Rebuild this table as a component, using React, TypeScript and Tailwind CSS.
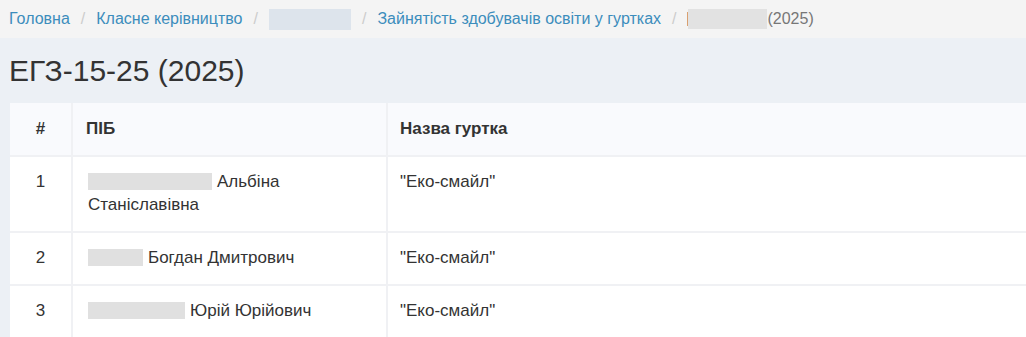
import React from "react";

const rows = [
  { n: 1, blur: "w-[124px]", name: "Альбіна Станіславівна", club: '"Еко-смайл"' },
  { n: 2, blur: "w-[55px]", name: "Богдан Дмитрович", club: '"Еко-смайл"' },
  { n: 3, blur: "w-[97px]", name: "Юрій Юрійович", club: '"Еко-смайл"' },
];

function Sep() {
  return <span className="px-[11px] text-[#cccccc]">/</span>;
}

export default function App() {
  return (
    <div className="w-[1026px] h-[337px] overflow-hidden bg-[#ecf0f5] text-[#333333] font-['Liberation_Sans',Arial,sans-serif]">
      {/* breadcrumb */}
      <div className="h-[38px] bg-[#f4f4f4] flex items-center pl-[9px] text-[16px] text-[#3c8dbc] whitespace-nowrap">
        <span>Головна</span>
        <Sep />
        <span>Класне керівництво</span>
        <Sep />
        <span className="inline-block w-[82px] h-[21px] bg-[#dde4ec]" />
        <Sep />
        <span>Зайнятість здобувачів освіти у гуртках</span>
        <Sep />
        <span className="flex items-center text-[#777777]">
          <span className="inline-block w-[1px] h-[14px] bg-[#d9a070]" />
          <span className="inline-block w-[79px] h-[20px] bg-[#e2e2e2]" />
          (2025)
        </span>
      </div>

      {/* title */}
      <h1 className="pl-[9px] pt-[13px] text-[30px] leading-[40px]">ЕГЗ-15-25 (2025)</h1>

      {/* table */}
      <div className="mt-[12px] ml-[10px] w-[1040px] bg-[#f0f1f4]">
        <div className="grid grid-cols-[61px_313px_1fr] gap-[2px] text-[17px]">
          <div className="bg-[#f9fafd] h-[52px] flex items-center justify-center font-bold">#</div>
          <div className="bg-[#f9fafd] h-[52px] flex items-center pl-[13px] font-bold">ПІБ</div>
          <div className="bg-[#f9fafd] h-[52px] flex items-center pl-[12px] font-bold">Назва гуртка</div>
          {rows.map((r) => (
            <React.Fragment key={r.n}>
              <div className="bg-white pt-[13px] pb-[15px] text-center leading-[23px]">{r.n}</div>
              <div className="bg-white pt-[13px] pb-[15px] pl-[15px] pr-[60px] leading-[23px]">
                <span className={`inline-block ${r.blur} h-[17px] align-[-3px] bg-[#e0e0e0] mr-[5px]`} />
                {r.name}
              </div>
              <div className="bg-white pt-[13px] pb-[15px] pl-[12px] leading-[23px]">{r.club}</div>
            </React.Fragment>
          ))}
        </div>
      </div>
    </div>
  );
}
